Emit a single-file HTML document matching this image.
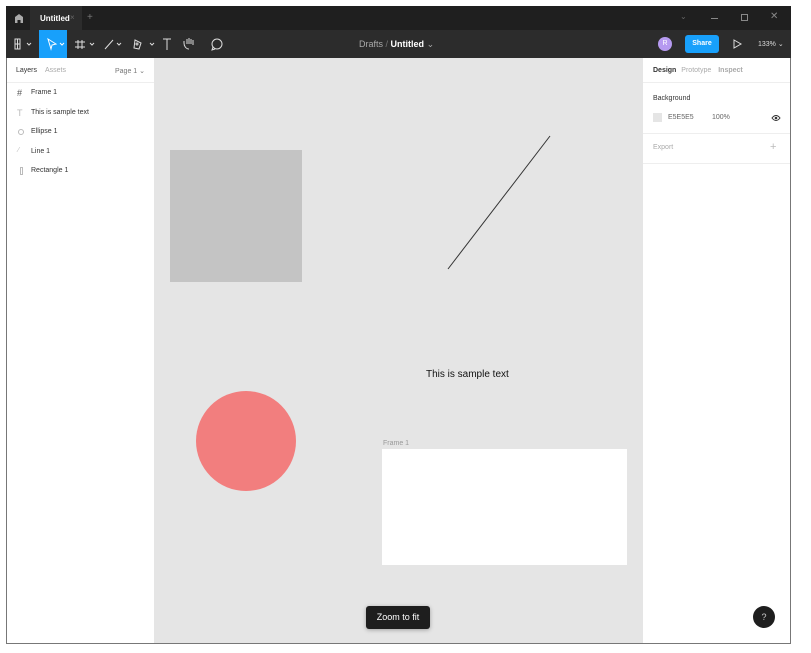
<!DOCTYPE html>
<html><head><meta charset="utf-8"><style>
*{margin:0;padding:0;box-sizing:border-box}
body{width:811px;height:653px;background:#fff;font-family:"Liberation Sans",sans-serif;position:relative;overflow:hidden}
.a{position:absolute}
.frame{left:6px;top:6px;width:785px;height:638px;border:1px solid #777;border-top:none}
.t{font-size:8px;color:#333;white-space:nowrap}
.g{color:#aaa}
</style></head><body>
<div class="a frame"></div>
<div class="a" style="left:6px;top:6px;width:785px;height:24px;background:#1f1f1f"></div>
<div class="a" style="left:30px;top:6px;width:52px;height:24px;background:#2c2c2c"></div>
<svg class="a" style="left:13px;top:12px" width="12" height="12"><path d="M2 11V5L6 2L10 5V11H7.5V8H4.5V11Z" fill="#aaa"/></svg>
<div class="a t" style="left:40px;top:14px;color:#fff;font-weight:bold;font-size:8px">Untitled</div>
<div class="a t" style="left:70px;top:13px;color:#666">×</div>
<div class="a t" style="left:87px;top:12px;color:#777;font-size:10px">+</div>
<div class="a t" style="left:680px;top:12px;color:#666">⌄</div>
<div class="a" style="left:711px;top:18px;width:7px;height:1px;background:#888"></div>
<div class="a" style="left:741px;top:14px;width:7px;height:7px;border:1px solid #888"></div>
<div class="a t" style="left:770px;top:11px;color:#888;font-size:10px">✕</div>
<div class="a" style="left:6px;top:30px;width:785px;height:28px;background:#2c2c2c"></div>
<div class="a" style="left:39px;top:30px;width:28px;height:28px;background:#18a0fb"></div>
<svg class="a" style="left:6px;top:30px" width="240" height="28" fill="none" stroke="#ddd" stroke-width="1">
<rect x="9" y="9" width="5" height="10"/><path d="M9 14H14M11.5 9V19"/><path d="M21 13l2 2 2-2"/>
<path d="M42 9l8 5-4 1-1 4z" stroke="#fff"/><path d="M54 13l2 2 2-2" stroke="#fff"/>
<path d="M72 10v9M76 10v9M69 12h10M69 17h10"/><path d="M84 13l2 2 2-2"/>
<path d="M99 19l8-9"/><path d="M111 13l2 2 2-2"/>
<path d="M129 10l6 3-2 6-5-1z"/><circle cx="131" cy="14" r="1"/><path d="M144 13l2 2 2-2"/>
<path d="M157 9h8M161 9v11"/>
<path d="M183 19c-3 0-5-3-5-6v-2M181 14V9M183 14V8M185 14V9M187 15v-5"/>
<circle cx="211" cy="14" r="5"/><path d="M207 17l-1 3 3-1"/>
</svg>
<div class="a t" style="left:359px;top:39px;font-size:9px;color:#aaa">Drafts <span style="color:#777">/</span> <b style="color:#fff">Untitled</b> <span style="color:#aaa">⌄</span></div>
<div class="a" style="left:658px;top:37px;width:14px;height:14px;border-radius:50%;background:#b69af0;color:#fff;font-size:7px;text-align:center;line-height:14px">R</div>
<div class="a" style="left:685px;top:35px;width:34px;height:18px;border-radius:3px;background:#18a0fb;color:#fff;font-size:7px;font-weight:bold;text-align:center;line-height:18px">Share</div>
<svg class="a" style="left:733px;top:39px" width="9" height="10"><path d="M1 1l7 4-7 4z" fill="none" stroke="#ddd"/></svg>
<div class="a t" style="left:758px;top:40px;color:#ddd;font-size:7px">133% ⌄</div>
<!-- left panel -->
<div class="a" style="left:7px;top:82px;width:147px;height:1px;background:#eee"></div>
<div class="a t" style="left:16px;top:67px;font-size:7px">Layers <span class="g" style="margin-left:6px">Assets</span></div>
<div class="a t" style="left:115px;top:67px;font-size:7px;color:#777">Page 1 ⌄</div>
<div class="a t" style="left:17px;top:88px;font-size:9px;color:#555">#</div>
<div class="a t" style="left:31px;top:89px;font-size:7px">Frame 1</div>
<div class="a t" style="left:17px;top:108px;font-size:9px;color:#bbb">T</div>
<div class="a t" style="left:31px;top:109px;font-size:7px">This is sample text</div>
<div class="a" style="left:18px;top:129px;width:6px;height:6px;border-radius:50%;border:1px solid #bbb"></div>
<div class="a t" style="left:31px;top:128px;font-size:7px">Ellipse 1</div>
<div class="a t" style="left:18px;top:147px;font-size:7px;color:#bbb">⁄</div>
<div class="a t" style="left:31px;top:148px;font-size:7px">Line 1</div>
<div class="a" style="left:20px;top:167px;width:3px;height:8px;border:1px solid #bbb"></div>
<div class="a t" style="left:31px;top:167px;font-size:7px">Rectangle 1</div>
<!-- canvas -->
<div class="a" style="left:154px;top:58px;width:489px;height:585px;background:#e5e5e5"></div>
<div class="a" style="left:170px;top:150px;width:132px;height:132px;background:#c4c4c4"></div>
<svg class="a" style="left:440px;top:130px" width="120" height="145"><line x1="8" y1="139" x2="110" y2="6" stroke="#333" stroke-width="1"/></svg>
<div class="a t" style="left:426px;top:369px;font-size:10px;color:#111">This is sample text</div>
<div class="a" style="left:196px;top:391px;width:100px;height:100px;border-radius:50%;background:#f27e7e"></div>
<div class="a t" style="left:383px;top:440px;font-size:7px;color:#999">Frame 1</div>
<div class="a" style="left:382px;top:449px;width:245px;height:116px;background:#fff"></div>
<div class="a" style="left:366px;top:606px;width:64px;height:23px;border-radius:3px;background:#1e1e1e;color:#fff;font-size:9px;text-align:center;line-height:23px;box-shadow:0 1px 4px rgba(0,0,0,.3)">Zoom to fit</div>
<!-- right panel -->
<div class="a t" style="left:653px;top:67px;font-size:7px;font-weight:bold">Design <span class="g" style="font-weight:normal;margin-left:3px">Prototype</span> <span class="g" style="margin-left:5px">Inspect</span></div>
<div class="a" style="left:643px;top:82px;width:147px;height:1px;background:#eee"></div>
<div class="a t" style="left:653px;top:95px;font-size:7px">Background</div>
<div class="a" style="left:653px;top:113px;width:9px;height:9px;background:#e5e5e5"></div>
<div class="a t" style="left:668px;top:114px;font-size:7px;color:#666">E5E5E5</div>
<div class="a t" style="left:712px;top:114px;font-size:7px;color:#666">100%</div>
<svg class="a" style="left:771px;top:114px" width="10" height="8"><path d="M1 4q4-5 8 0q-4 5-8 0z" fill="none" stroke="#333"/><circle cx="5" cy="4" r="1.3" fill="#333"/></svg>
<div class="a" style="left:643px;top:133px;width:147px;height:1px;background:#eee"></div>
<div class="a t" style="left:653px;top:144px;font-size:7px;color:#aaa">Export</div>
<div class="a t" style="left:770px;top:141px;font-size:11px;color:#bbb">+</div>
<div class="a" style="left:643px;top:163px;width:147px;height:1px;background:#eee"></div>
<div class="a" style="left:753px;top:606px;width:22px;height:22px;border-radius:50%;background:#1e1e1e;color:#ccc;font-size:9px;text-align:center;line-height:22px">?</div>
</body></html>
